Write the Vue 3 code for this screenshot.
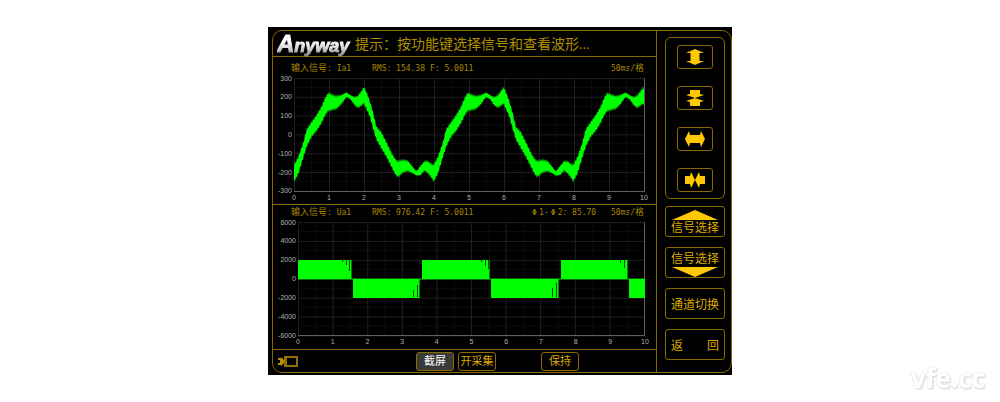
<script setup>
const ticks = [0, 1, 2, 3, 4, 5, 6, 7, 8, 9, 10]
const halves = Array.from({ length: 20 }, (_, i) => i + 0.5).filter((v) => v < 10)
const rows = [0, 1, 2, 3, 4, 5, 6]

const current = { x0: 21, unit: 35, y0: 3, step: 18.8, labels: [300, 200, 100, 0, -100, -200, -300] }
const voltage = { x0: 25, unit: 34.7, y0: 3, step: 18.9, labels: [6000, 4000, 2000, 0, -2000, -4000, -6000] }

/* one period of the current signal: offset, upper edge, lower edge (thirds of a unit) */
const envelope = [
  [0, 272, 318], [13, 248, 295], [28, 205, 245], [38, 165, 213], [53, 143, 183], [68, 122, 166],
  [83, 97, 142], [93, 72, 120], [103, 55, 106], [113, 60, 104], [128, 65, 100], [143, 61, 86],
  [158, 53, 65], [170, 61, 72], [183, 68, 90], [193, 63, 97], [203, 50, 90], [211, 38, 84],
  [220, 58, 105], [228, 80, 122], [238, 115, 158], [248, 158, 192], [263, 173, 218], [278, 203, 243],
  [293, 235, 273], [305, 255, 297], [313, 260, 304], [328, 256, 291], [343, 259, 287], [358, 277, 294],
  [368, 290, 301], [380, 275, 300], [393, 260, 285], [403, 260, 293], [413, 268, 305], [420, 272, 318],
]

function edgesAt(offset) {
  const i = Math.max(1, envelope.findIndex((e) => e[0] >= offset))
  const [a, b] = [envelope[i - 1], envelope[i]]
  const t = (offset - a[0]) / (b[0] - a[0])
  return [a[1] + (b[1] - a[1]) * t, a[2] + (b[2] - a[2]) * t]
}

function buildWave() {
  const upper = []
  const lower = []
  for (let i = 0; i <= 350; i++) {
    const [top, bottom] = edgesAt((i * 3.01) % 420)
    const jag = Math.min(2, (bottom - top) / 18) * (i % 2 ? -1 : 0.5)
    upper.push(`${21 + i},${(top / 3 + jag).toFixed(1)}`)
    lower.unshift(`${21 + i},${(bottom / 3 - jag).toFixed(1)}`)
  }
  return upper.concat(lower).join(' ')
}
const wave = buildWave()

const pulses = [
  { x: 25, w: 53.5, up: true }, { x: 80, w: 66.5, up: false },
  { x: 149, w: 67.5, up: true }, { x: 218, w: 67.5, up: false },
  { x: 288, w: 66.5, up: true }, { x: 356, w: 16, up: false },
]
const notches = [
  [69, 41, 2], [73, 41, 5], [76, 41, 11], [140, 71, 7], [144, 66, 12],
  [208, 41, 2], [212, 41, 6], [215, 41, 9], [279, 69, 9], [283, 64, 14],
  [347, 41, 3], [351, 41, 8],
]

const zoomButtons = [
  { label: '垂直放大', d: 'M10 0 19 4 14.500 4V12L19 12 10 16 1 12 5.500 12V4L1 4Z' },
  { label: '垂直缩小', d: 'M5 0H15V4L19 5 10 8 1 5 5 4ZM10 8 19 11 15 12V16H5V12L1 11Z' },
  { label: '水平放大', d: 'M0 8 4 0 5 4H15L16 0 20 8 16 16 15 12H5L4 16Z' },
  { label: '水平缩小', d: 'M0 4H5L6 0 10 8 6 16 5 12H0ZM20 4H15L14 0 10 8 14 16 15 12H20Z' },
]
</script>

<template>
  <div class="page">
    <div class="device">
      <div class="frame">
        <main class="main">
          <header class="header">
            <div class="logo"><span class="logo-cap">A</span>nyway</div>
            <div class="hint">提示：按功能键选择信号和查看波形...</div>
          </header>

          <section class="panel">
            <div class="info info-first">
              <span><span class="han">输入信号</span>: Ia1</span>
              <span>RMS: 154.38</span>
              <span>F: 5.0011</span>
              <span></span>
              <span class="scale">50ms/<span class="han">格</span></span>
            </div>
            <svg class="chart" viewBox="0 0 383 129">
              <g class="minor">
                <line v-for="h in halves" :key="h" :x1="current.x0 + h * 35" :x2="current.x0 + h * 35" y1="3" y2="116" />
                <line v-for="r in 6" :key="'m' + r" x1="21" x2="371" :y1="r * 18.8 - 6.4" :y2="r * 18.8 - 6.4" />
              </g>
              <g class="major">
                <line v-for="t in ticks" :key="t" :x1="21.5 + t * 35" :x2="21.5 + t * 35" y1="3" y2="116" />
                <line v-for="r in rows" :key="'r' + r" x1="21" x2="371" :y1="3.5 + r * 18.8" :y2="3.5 + r * 18.8" />
              </g>
              <path class="axis" d="M21 116.5H371.5V3" />
              <polygon class="signal" :points="wave" />
              <g class="tick">
                <text v-for="(l, i) in current.labels" :key="l" x="19" :y="5.5 + i * current.step" text-anchor="end">{{ l }}</text>
                <text v-for="t in ticks" :key="'x' + t" :x="21 + t * 35" y="125" text-anchor="middle">{{ t }}</text>
              </g>
            </svg>
          </section>

          <section class="panel">
            <div class="info">
              <span><span class="han">输入信号</span>: Ua1</span>
              <span>RMS: 976.42</span>
              <span>F: 5.0011</span>
              <span><span class="phi">Φ</span>1-<span class="phi">Φ</span>2: 85.70</span>
              <span class="scale">50ms/<span class="han">格</span></span>
            </div>
            <svg class="chart" viewBox="0 0 383 130">
              <g class="minor">
                <line v-for="h in halves" :key="h" :x1="voltage.x0 + h * 34.7" :x2="voltage.x0 + h * 34.7" y1="3" y2="116" />
                <line v-for="r in 6" :key="'m' + r" x1="25" x2="372" :y1="r * 18.9 - 6.4" :y2="r * 18.9 - 6.4" />
              </g>
              <g class="major">
                <line v-for="t in ticks" :key="t" :x1="25.5 + t * 34.6" :x2="25.5 + t * 34.6" y1="3" y2="116" />
                <line v-for="r in rows" :key="'r' + r" x1="25" x2="372" :y1="3.5 + r * 18.9" :y2="3.5 + r * 18.9" />
              </g>
              <path class="axis" d="M25 116.5H371.5V3" />
              <path class="zero" d="M25 60H372" />
              <rect v-for="p in pulses" :key="p.x" class="signal" :x="p.x" :y="p.up ? 41 : 60" :width="p.w" height="19" />
              <rect v-for="n in notches" :key="n[0]" class="notch" :x="n[0]" :y="n[1]" width="1" :height="n[2]" />
              <g class="tick">
                <text v-for="(l, i) in voltage.labels" :key="l" x="23" :y="5.5 + i * voltage.step" text-anchor="end">{{ l }}</text>
                <text v-for="t in ticks" :key="'x' + t" :x="25 + t * voltage.unit" y="125" text-anchor="middle">{{ t }}</text>
              </g>
            </svg>
          </section>

          <footer class="footer">
            <svg class="usb" viewBox="0 0 20 11">
              <path d="M0 2H3V1L6 4V7L3 10V9H0V7H2V4H0Z" fill="#b89000" />
              <rect x="7" y="1" width="12" height="9" fill="none" stroke="#8f7000" stroke-width="2" />
              <rect x="6" y="1" width="3" height="9" fill="#8f7000" />
            </svg>
            <button class="key active" type="button">截屏</button>
            <button class="key" type="button">开采集</button>
            <button class="key" type="button">保持</button>
          </footer>
        </main>

        <aside class="side">
          <div class="zoom-group">
            <button v-for="b in zoomButtons" :key="b.label" class="zoom" type="button" :aria-label="b.label">
              <svg viewBox="0 0 20 16"><path :d="b.d" /></svg>
            </button>
          </div>
          <button class="soft" type="button">
            <svg class="arrow" viewBox="0 0 46 10"><path d="M23 0 46 10H0Z" /></svg>
            <span>信号选择</span>
          </button>
          <button class="soft" type="button">
            <span>信号选择</span>
            <svg class="arrow" viewBox="0 0 46 10"><path d="M0 0H46L23 10Z" /></svg>
          </button>
          <button class="soft" type="button"><span>通道切换</span></button>
          <button class="soft back" type="button"><span>返</span><span>回</span></button>
        </aside>
      </div>
    </div>
    <div class="watermark">vfe.cc</div>
  </div>
</template>

<style>
body {
  background: #fff;
}
</style>

<style scoped>
.page {
  position: relative;
  box-sizing: border-box;
  min-height: 100vh;
  padding: 27px 0;
  font-family: "Liberation Sans", "Noto Sans CJK SC", sans-serif;
}
.device {
  box-sizing: border-box;
  width: 46.4%;
  min-width: 440px;
  margin: 0 auto;
  padding: 3px 0 2px 4px;
  background: #000;
}
.frame {
  display: flex;
  border: 1px solid #8a6a00;
  border-radius: 10px;
}
.main {
  flex: 1;
  min-width: 0;
  border-right: 1px solid #8a6a00;
}
.header {
  display: flex;
  align-items: center;
  height: 25px;
  padding-left: 4px;
  border-bottom: 1px solid #8a6a00;
  white-space: nowrap;
}
.logo {
  width: 78px;
  padding-top: 2px;
  font-size: 18px;
  line-height: 24px;
  font-weight: bold;
  font-style: italic;
  color: transparent;
  -webkit-text-stroke: 1px transparent;
  background: linear-gradient(#fff 40%, #d8d8d8 65%, #8c8c8c 90%);
  background-clip: text;
  -webkit-background-clip: text;
}
.logo-cap {
  font-size: 24px;
}
.hint {
  padding-top: 2px;
  font-family: "Liberation Serif", "Noto Sans CJK SC", serif;
  font-size: 14px;
  line-height: 24px;
  color: #b09000;
}
.panel {
  border-bottom: 1px solid #8a6a00;
}
.info {
  display: grid;
  grid-template-columns: minmax(0, 81fr) minmax(0, 58fr) minmax(0, 100fr) minmax(0, 79fr) minmax(0, 35fr);
  align-items: center;
  box-sizing: border-box;
  height: 14px;
  padding: 1px 12px 0 18px;
  font-family: "DejaVu Sans Mono", "Noto Sans CJK SC", monospace;
  font-size: 8px;
  line-height: 13px;
  color: #a88800;
  white-space: nowrap;
}
.info-first {
  height: 18px;
  padding-top: 4px;
}
.scale {
  justify-self: end;
}
.han {
  font-size: 9px;
}
.phi {
  display: inline-block;
  width: 9px;
  text-align: center;
}
.chart {
  display: block;
  width: 100%;
  height: auto;
}
.minor line {
  stroke: #0c0c0c;
}
.major line {
  stroke: #202020;
}
.axis {
  fill: none;
  stroke: #606060;
}
.zero {
  stroke: #00b800;
}
.signal {
  fill: #0f0;
}
.notch {
  fill: #064806;
}
.tick {
  font-size: 7px;
  fill: #b4b4b4;
}
.footer {
  display: grid;
  grid-template-columns: 143fr 42px 83px 115fr;
  align-items: center;
  height: 22px;
}
.usb {
  width: 20px;
  height: 11px;
  margin-left: 5px;
}
button {
  display: flex;
  align-items: center;
  justify-content: center;
  box-sizing: border-box;
  margin: 0;
  padding: 0;
  border: 1px solid #8a6a00;
  border-radius: 3px;
  background: transparent;
  color: #dcac00;
  font-family: "Liberation Sans", "Noto Sans CJK SC", sans-serif;
  white-space: nowrap;
}
.key {
  width: 38px;
  height: 19px;
  font-size: 11px;
  line-height: 16px;
}
.key.active {
  background: #3a3a3a;
  color: #fff;
}
.side {
  box-sizing: border-box;
  width: 74px;
  padding: 6px 6px 11px 8px;
}
.zoom-group {
  display: grid;
  justify-items: center;
  gap: 17px;
  padding: 7px 0 6px;
  border: 1px solid #8a6a00;
  border-radius: 6px;
  margin-bottom: 7px;
}
.zoom {
  width: 36px;
  height: 24px;
}
.zoom svg {
  width: 20px;
  height: 16px;
}
.zoom path,
.arrow path {
  fill: #ffc800;
}
.soft {
  flex-direction: column;
  width: 100%;
  height: 31px;
  margin-bottom: 10px;
  padding-top: 2px;
  font-size: 12px;
  line-height: 16px;
}
.soft:last-child {
  margin-bottom: 0;
}
.arrow {
  width: 46px;
  height: 10px;
}
.back {
  flex-direction: row;
  justify-content: space-between;
  padding: 2px 5px 0;
}
.watermark {
  position: absolute;
  right: 15px;
  bottom: 10px;
  font-family: "Open Sans", "Liberation Sans", sans-serif;
  font-size: 26px;
  line-height: 28px;
  font-weight: bold;
  color: #fff;
  text-shadow: 0 0 2px #ddd, 1px 1px 2px #ccc;
}
</style>
